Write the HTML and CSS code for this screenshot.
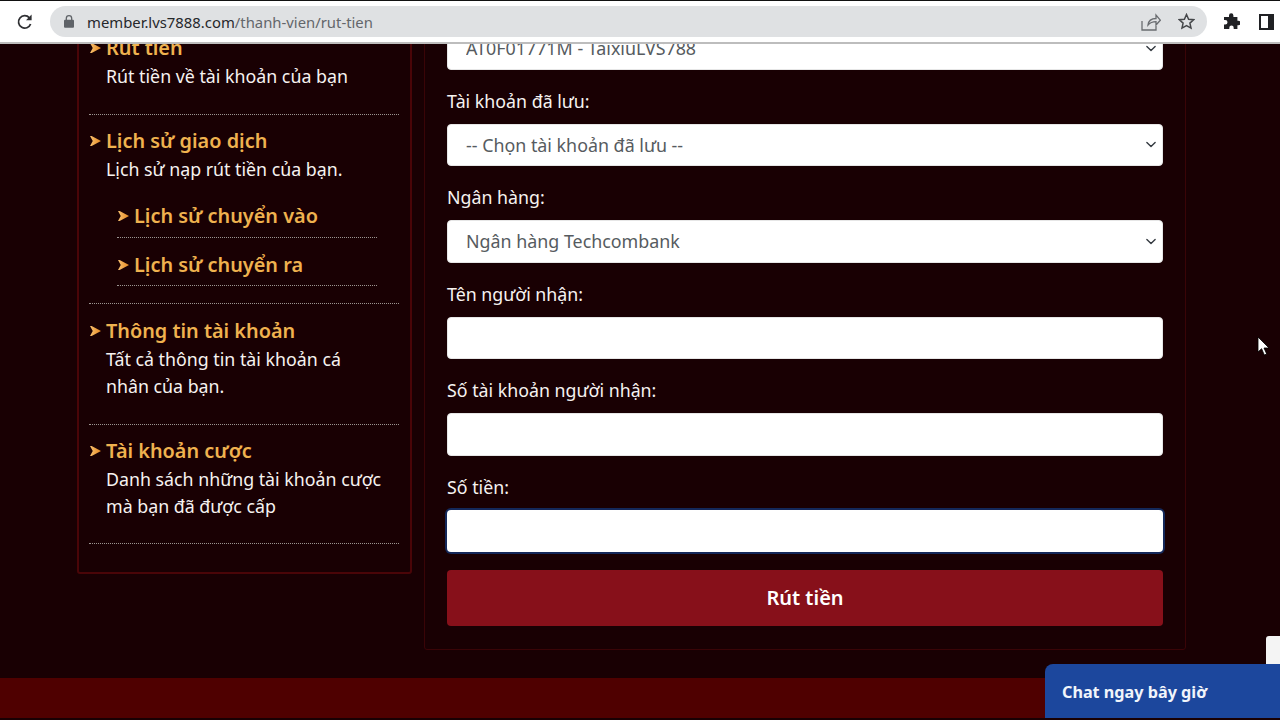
FILE: index.html
```html
<!DOCTYPE html>
<html lang="vi">
<head>
    <meta charset="UTF-8">
    <meta name="viewport" content="width=device-width, initial-scale=1.0">
    <title>Rút tiền</title>
    <link rel="stylesheet" href="styles.css">
</head>
<body>
    <header class="toolbar">
        <svg class="reload" width="18" height="18" viewBox="0 0 18 18"><path d="M14.6 11a6.2 6.2 0 1 1-1.2-6.2" fill="none" stroke="#2f3033" stroke-width="1.8"/><path d="M15.6 1.6v5.6H10z" fill="#2f3033"/></svg>
        <div class="omnibox">
            <svg class="lock" width="10" height="13" viewBox="0 0 10 13"><path d="M2.3 5V3.4a2.7 2.7 0 0 1 5.4 0V5" fill="none" stroke="#5f6368" stroke-width="1.3"/><rect y="4.8" width="10" height="8" rx="1" fill="#5f6368"/></svg>
            <div class="url">member.lvs7888.com<span class="url-path">/thanh-vien/rut-tien</span></div>
            <svg class="share" width="20" height="18" viewBox="0 0 20 18"><path d="M1 8v9h14v-4M7 12c.5-4 3.5-6.500 8-6.500V2l4.300 5.200-4.300 4.800V8.700c-3.500 0-6 1-8 3.300z" fill="none" stroke="#696c70" stroke-width="1.300"/></svg>
            <svg class="star" width="17" height="17" viewBox="0 0 17 17"><path d="M8.500 1.500l2.100 4.700 5.100.5-3.800 3.400 1.100 5-4.500-2.600L4 15.100l1.100-5L1.300 6.700l5.100-.5z" fill="none" stroke="#45474a" stroke-width="1.500"/></svg>
        </div>
        <svg class="puzzle" width="17" height="17" viewBox="0 0 17 17"><path d="M6 2.500a2.200 2.200 0 0 1 4.400 0V4h4v3.700h1a2.300 2.300 0 0 1 0 4.600h-1V16h-3.700v-1.200a2.200 2.200 0 0 0-4.400 0V16H1v-4.400h1.200a2.300 2.300 0 0 0 0-4.600H1V4h5z" fill="#202124"/></svg>
        <div class="side-panel"><span class="side-panel-fill"></span></div>
    </header>

    <main class="page">
        <div class="content">
            <aside class="sidebar">
                <section class="menu-item">
                    <h3 class="menu-title"><span class="arrow"></span>Rút tiền</h3>
                    <p class="menu-desc">Rút tiền về tài khoản của bạn</p>
                </section>
                <section class="menu-item menu-item-sub">
                    <h3 class="menu-title"><span class="arrow"></span>Lịch sử giao dịch</h3>
                    <p class="menu-desc">Lịch sử nạp rút tiền của bạn.</p>
                    <div class="submenu">
                        <h4 class="menu-title"><span class="arrow"></span>Lịch sử chuyển vào</h4>
                        <h4 class="menu-title"><span class="arrow"></span>Lịch sử chuyển ra</h4>
                    </div>
                </section>
                <section class="menu-item">
                    <h3 class="menu-title"><span class="arrow"></span>Thông tin tài khoản</h3>
                    <p class="menu-desc">Tất cả thông tin tài khoản cá nhân của bạn.</p>
                </section>
                <section class="menu-item menu-item-last">
                    <h3 class="menu-title"><span class="arrow"></span>Tài khoản cược</h3>
                    <p class="menu-desc">Danh sách những tài khoản cược mà bạn đã được cấp</p>
                </section>
            </aside>

            <form class="panel">
                <div class="field">
                    <select class="control control-select"><option>AT0F01771M - TaixiuLVS788</option></select>
                </div>
                <div class="field">
                    <label class="field-label">Tài khoản đã lưu:</label>
                    <select class="control control-select"><option>-- Chọn tài khoản đã lưu --</option></select>
                </div>
                <div class="field">
                    <label class="field-label">Ngân hàng:</label>
                    <select class="control control-select"><option>Ngân hàng Techcombank</option></select>
                </div>
                <div class="field">
                    <label class="field-label">Tên người nhận:</label>
                    <input class="control" type="text">
                </div>
                <div class="field">
                    <label class="field-label">Số tài khoản người nhận:</label>
                    <input class="control" type="text">
                </div>
                <div class="field">
                    <label class="field-label">Số tiền:</label>
                    <input class="control control-focus" type="text">
                </div>
                <button class="submit" type="button">Rút tiền</button>
            </form>
        </div>
        <footer class="footer"></footer>
    </main>

    <div class="recaptcha"></div>
    <div class="chat">Chat ngay bây giờ</div>
    <svg class="cursor" width="14" height="21" viewBox="0 0 14 21"><path d="M1 1v15l3.600-3.300 2.700 6.300 2.400-1-2.700-6h5z" fill="#fff" stroke="#000" stroke-width=".8"/></svg>
</body>
</html>
```

FILE: styles.css
```css
* {
    margin: 0;
    padding: 0;
    box-sizing: border-box;
}

html, body {
    height: 100%;
    overflow: hidden;
}

body {
    font-family: 'Noto Sans', 'Open Sans', sans-serif;
    display: flex;
    flex-direction: column;
    background: #190003;
    color: #fff;
}

/* browser bar */
.toolbar {
    flex: none;
    height: 44px;
    display: flex;
    align-items: center;
    background: #fff;
    border-top: 1px solid #111;
    border-bottom: 2px solid #bdbdbd;
    padding-left: 16px;
    position: relative;
    z-index: 2;
}

.reload {
    flex: none;
    margin-right: 16px;
}

.omnibox {
    flex: none;
    width: 1157px;
    height: 31px;
    border-radius: 16px;
    background: #dfe1e3;
    display: flex;
    align-items: center;
    padding-left: 14px;
}

.lock {
    flex: none;
    margin-right: 13px;
}

.url {
    flex: 1;
    font-size: 14.85px;
    color: #26282b;
}

.url-path {
    color: #63666a;
}

.share {
    flex: none;
    margin-right: 17px;
}

.star {
    flex: none;
    margin-right: 12px;
}

.puzzle {
    flex: none;
    margin-left: 16px;
}

.side-panel {
    flex: none;
    width: 15px;
    height: 16px;
    margin-left: 19px;
    background: #202124;
    padding: 2px;
}

.side-panel-fill {
    display: block;
    height: 100%;
    width: 7px;
    background: #fff;
}

/* page, scrolled down a bit */
.page {
    flex: 1;
    overflow: hidden;
}

.content {
    display: flex;
    align-items: flex-start;
    gap: 12px;
    margin-top: -30px;
    margin-bottom: 28px;
    padding-left: 77px;
}

.sidebar {
    flex: none;
    width: 335px;
    border: 2px solid #4a0508;
    border-radius: 3px;
    padding: 5px 11px 28px 10px;
}

.menu-item {
    padding: 12px 0 24px;
    border-bottom: 1px dotted #9b9491;
}

.menu-item-sub {
    padding: 11px 0 17px;
}

.menu-item-last {
    padding: 11px 0 23px;
}

.menu-title {
    position: relative;
    font-size: 19.85px;
    line-height: 30px;
    font-weight: 600;
    color: #efb24f;
    padding-left: 17px;
}

.arrow {
    position: absolute;
    left: 1px;
    top: 10px;
    width: 11px;
    height: 10px;
    background: linear-gradient(90deg, #f6c070, #e8891f);
    clip-path: polygon(0 0, 15% 0, 100% 50%, 15% 100%, 0 100%, 25% 50%);
}

.menu-desc {
    font-size: 17.8px;
    line-height: 27px;
    padding: 0 14px 0 17px;
    color: #f6f2f0;
}

.submenu {
    margin: 18px 22px 0 28px;
}

.submenu .menu-title {
    padding: 0 0 6px 17px;
    margin-bottom: 12px;
    border-bottom: 1px dotted #9b9491;
}

.submenu .menu-title:last-child {
    padding-bottom: 5px;
    margin-bottom: 0;
}

.panel {
    flex: none;
    width: 762px;
    border: 1px solid #3a0407;
    border-radius: 3px;
    padding: 12px 22px 23px;
}

.field {
    margin-bottom: 19px;
}

.field:last-of-type {
    margin-bottom: 18px;
}

.field-label {
    display: block;
    font-size: 17.8px;
    line-height: 25px;
    margin-bottom: 10px;
    color: #f6f2f0;
}

.control {
    display: block;
    width: 100%;
    height: 42.5px;
    font-family: inherit;
    font-size: 17.85px;
    color: #565b60;
    background: #fff;
    border: 1px solid #e6e6e6;
    border-radius: 4px;
    padding: 0 18px;
    outline: none;
}

.control-select {
    appearance: none;
    background-image: url("data:image/svg+xml,%3Csvg xmlns='http://www.w3.org/2000/svg' viewBox='0 0 16 16'%3E%3Cpath fill='none' stroke='%23343a40' stroke-linecap='round' stroke-linejoin='round' stroke-width='2' d='M2 5l6 6 6-6'/%3E%3C/svg%3E");
    background-repeat: no-repeat;
    background-position: right 5px center;
    background-size: 12px 11px;
}

.control-focus {
    border: none;
    box-shadow: 0 0 0 2px #14285a;
}

.submit {
    display: block;
    width: 100%;
    height: 56px;
    border: none;
    border-radius: 4px;
    background: #87101a;
    color: #fff;
    font-family: inherit;
    font-size: 20px;
    font-weight: 600;
    padding-bottom: 2px;
}

.footer {
    height: 40px;
    background: #4f0000;
}

/* floating bits */
.recaptcha {
    position: absolute;
    right: 0;
    top: 636px;
    width: 14px;
    height: 40px;
    background: #f4f4f4;
    border-radius: 3px 0 0 3px;
}

.chat {
    position: absolute;
    left: 1045px;
    right: 0;
    top: 664px;
    height: 54px;
    background: #1c479d;
    border-radius: 8px 0 0 0;
    padding-left: 17px;
    font-size: 16.2px;
    line-height: 57px;
    font-weight: 700;
    color: #f1f5fb;
}

.cursor {
    position: absolute;
    left: 1257px;
    top: 336px;
}
```
